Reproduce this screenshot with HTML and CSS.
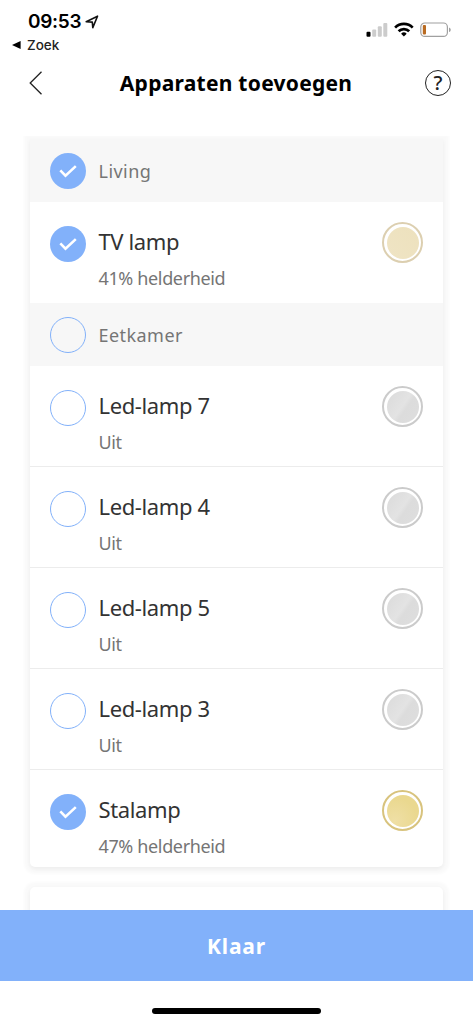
FILE: index.html
```html
<!DOCTYPE html>
<html lang="nl">
<head>
<meta charset="utf-8">
<title>Apparaten toevoegen</title>
<link rel="stylesheet" href="styles.css">
</head>
<body>
<svg class="defs" aria-hidden="true">
  <symbol id="check" viewBox="0 0 36 36"><path d="M10.300 17.400l5.200 5.300 10.300-9.600" fill="none" stroke="#fff" stroke-width="2.600"/></symbol>
</svg>
<div class="screen">
  <div class="status">
    <div class="status-left">
      <div class="clock"><span class="time">09:53</span>
        <svg class="arrow" width="14" height="14" viewBox="0 0 14 14"><path d="M1.200 6.700L12.500 1.200 7.800 12.600 7.300 7.100z" fill="none" stroke="#111" stroke-width="1.600" stroke-linejoin="round"/></svg>
      </div>
      <div class="back-app"><svg width="9" height="8" viewBox="0 0 9 8"><path d="M0 4L8.600 0v8z"/></svg><span>Zoek</span></div>
    </div>
    <svg class="status-icons" width="86" height="16" viewBox="0 0 86 16">
      <rect x="0.500" y="9.700" width="4" height="5.100" rx="1"/>
      <g fill="#ccc"><rect x="6.200" y="7.500" width="4" height="7.300" rx="1"/><rect x="11.800" y="4.200" width="4" height="10.600" rx="1"/><rect x="17.300" y="1" width="4" height="13.800" rx="1"/></g>
      <g fill="none" stroke="#000" stroke-width="2.700"><path d="M29.100 5.600a12.400 12.400 0 0 1 17.600 0"/><path d="M32.600 9.300a7.400 7.400 0 0 1 10.600 0"/></g>
      <path d="M37.900 14.600l-2.800-2.900a4 4 0 0 1 5.600 0z"/>
      <rect x="54.800" y="1" width="26.600" height="13.400" rx="4" fill="none" stroke="#a0a0a0" stroke-width="1.200"/>
      <rect x="56.800" y="3" width="3.200" height="9.400" rx="1" fill="#b96b22"/>
      <path d="M83 5.400c2.300.8 2.300 3.800 0 4.600z" fill="#a0a0a0"/>
    </svg>
  </div>
  <header class="nav">
    <svg width="14" height="26" viewBox="0 0 14 26"><path d="M12.500 1.700L1.200 13l11.300 11.300" fill="none" stroke="#222" stroke-width="1.300"/></svg>
    <h1>Apparaten toevoegen</h1>
    <div class="help">?</div>
  </header>
  <main class="scroll">
    <section class="card">
      <div class="group"><svg class="tick on"><use href="#check"/></svg><span>Living</span></div>
      <div class="item last"><svg class="tick on"><use href="#check"/></svg><div class="text"><div class="name">TV lamp</div><div class="state">41% helderheid</div></div><div class="lamp cream"></div></div>
      <div class="group"><div class="tick"></div><span>Eetkamer</span></div>
      <div class="item"><div class="tick"></div><div class="text"><div class="name">Led-lamp 7</div><div class="state">Uit</div></div><div class="lamp"></div></div>
      <div class="item"><div class="tick"></div><div class="text"><div class="name">Led-lamp 4</div><div class="state">Uit</div></div><div class="lamp"></div></div>
      <div class="item"><div class="tick"></div><div class="text"><div class="name">Led-lamp 5</div><div class="state">Uit</div></div><div class="lamp"></div></div>
      <div class="item"><div class="tick"></div><div class="text"><div class="name">Led-lamp 3</div><div class="state">Uit</div></div><div class="lamp"></div></div>
      <div class="item end"><svg class="tick on"><use href="#check"/></svg><div class="text"><div class="name">Stalamp</div><div class="state">47% helderheid</div></div><div class="lamp gold"></div></div>
    </section>
    <section class="card next"></section>
  </main>
  <div class="done">Klaar</div>
  <footer class="home"><div class="indicator"></div></footer>
</div>
</body>
</html>
```
FILE: styles.css
```css
* { box-sizing: border-box; }
body { margin: 0; background: #fff; font-family: "Noto Sans", sans-serif; }
.defs { display: none; }
.screen { width: 473px; height: 1024px; display: flex; flex-direction: column; overflow: hidden; }
.status { height: 56px; flex: none; display: flex; justify-content: space-between; padding: 0 21px 0 12px; font-family: Inter, sans-serif; }
.status-left { padding-top: 10px; }
.clock { display: flex; align-items: center; gap: 4px; height: 24px; padding-left: 16px; }
.time { font-size: 19px; font-weight: 600; line-height: 24px; letter-spacing: -.3px; }
.back-app { display: flex; align-items: center; gap: 6px; height: 21px; font-size: 13.5px; font-weight: 500; color: #222; }
.status-icons { margin-top: 22px; }
.nav { height: 80px; flex: none; display: flex; justify-content: space-between; align-items: center; padding: 0 22px 26px 29px; }
.nav h1 { margin: 0; padding-left: 4px; font-size: 21px; font-weight: 700; line-height: 30px; letter-spacing: .26px; color: #000; white-space: nowrap; }
.help { width: 26px; height: 26px; border: 1.5px solid #222; border-radius: 50%; font-size: 20px; font-weight: 500; line-height: 23px; text-align: center; color: #222; }
.scroll { flex: 1; overflow: hidden; padding: 3px 30px 0; }
.card { background: #fff; border-radius: 0 0 5px 5px; box-shadow: 0 2px 4px rgba(0,0,0,.05), 0 1px 3px 6px rgba(0,0,0,.025); }
.next { margin-top: 20px; height: 60px; border-radius: 5px; }
.group { height: 63px; display: flex; align-items: center; gap: 12px; padding: 0 20px; background: #f7f7f7; color: #757575; font-size: 18px; letter-spacing: .45px; }
.group span { padding-left: .5px; }
.tick { width: 36px; height: 36px; flex: none; border: 1.3px solid #82b1fa; border-radius: 50%; }
.tick.on { border: 0; background: #82b1fa; }
.item { height: 101px; display: flex; align-items: flex-start; gap: 12px; padding: 24px 20px 0; border-bottom: 1.5px solid #ececec; }
.item.last { border-bottom: 0; }
.item.end { height: 97px; border-bottom: 0; }
.text { flex: 1; padding-left: .5px; }
.name { font-size: 22px; line-height: 30px; letter-spacing: -.38px; color: #333; }
.state { margin-top: 9px; font-size: 18px; line-height: 26px; letter-spacing: -.36px; color: #757575; }
/* Lamp faces: an inner disc inside a thin ring */
.lamp { width: 41px; height: 41px; margin-top: -4px; border: 2px solid #cbcbcb; border-radius: 50%; padding: 2.5px; background: #fff; }
.lamp::before { content: ""; display: block; height: 100%; border-radius: 50%; background: linear-gradient(125deg, #dadada, #e3e3e3 48%, #dcdcdc 58%, #dedede); }
.lamp.cream { border-color: #dccfb0; }
.cream::before { background: linear-gradient(45deg, #efe4c4, #ede1bd); }
.lamp.gold { border-color: #d8c37d; }
.gold::before { background: radial-gradient(circle at 25% 80%, #efdfa5, #ead88f 65%); }
.done { height: 71px; flex: none; background: #82b1fa; color: #fff; font-size: 21px; font-weight: 700; letter-spacing: .9px; line-height: 73px; text-align: center; }
.home { height: 43px; flex: none; display: flex; justify-content: center; padding-top: 27px; }
.indicator { width: 169px; height: 6px; border-radius: 3px; background: #000; }
```
